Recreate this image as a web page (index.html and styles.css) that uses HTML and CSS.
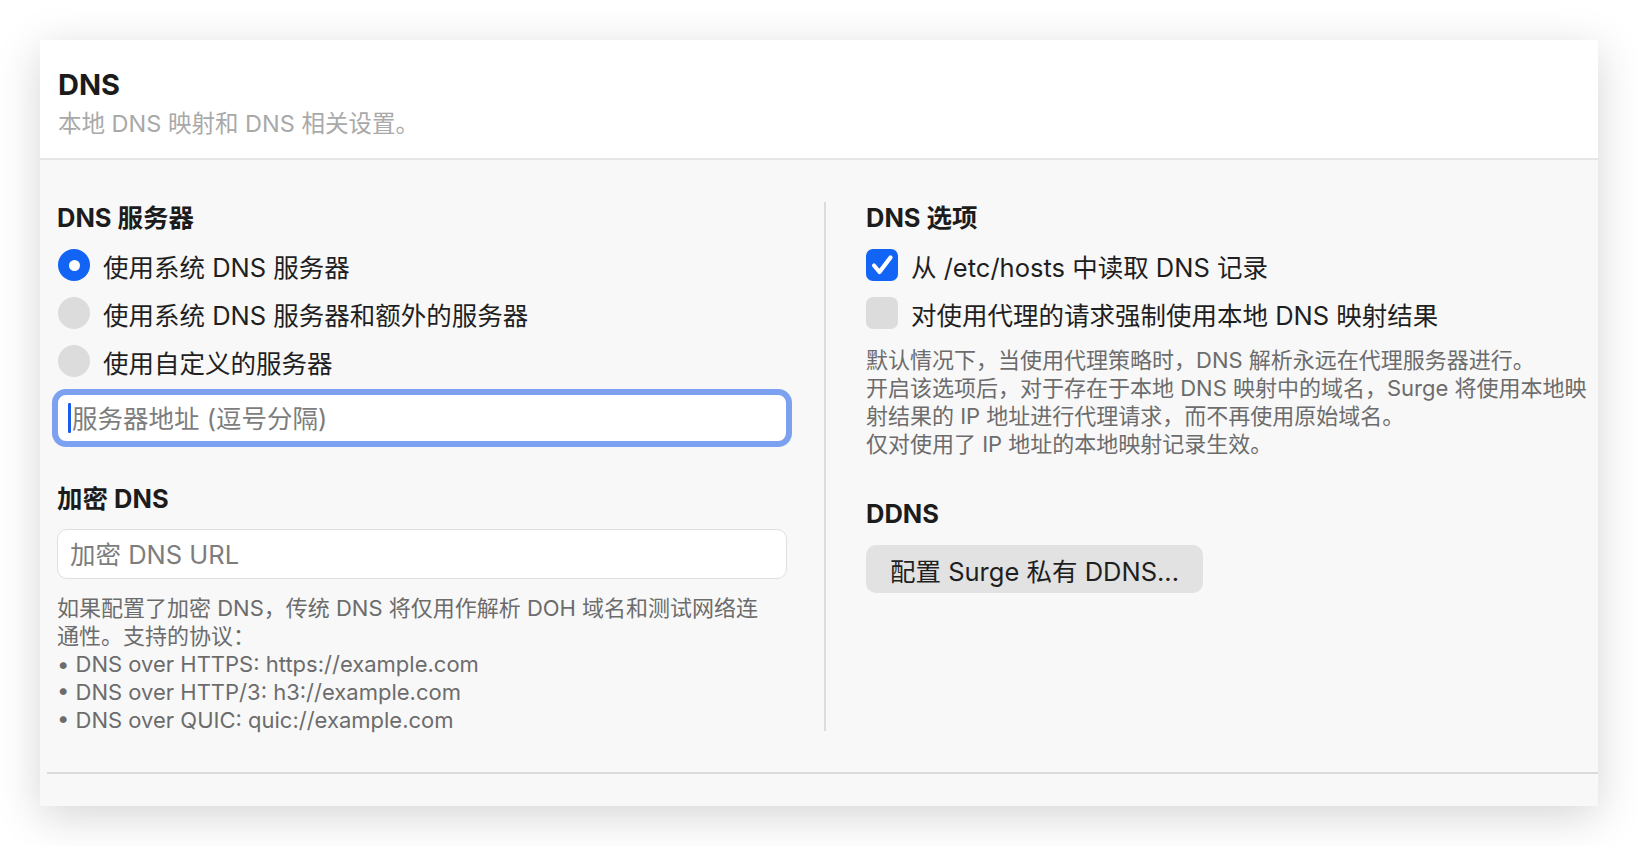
FILE: index.html
```html
<!DOCTYPE html>
<html lang="zh-CN">
<head>
  <meta charset="UTF-8">
  <title>DNS</title>
  <link rel="stylesheet" href="styles.css">
</head>
<body>

  <div class="window">
    <header class="head">
      <h1>DNS</h1>
      <p class="sub">本地 DNS 映射和 DNS 相关设置。</p>
    </header>

    <div class="body">
      <section class="col left">
        <h2>DNS 服务器</h2>
        <label class="opt first"><span class="radio on"></span>使用系统 DNS 服务器</label>
        <label class="opt"><span class="radio"></span>使用系统 DNS 服务器和额外的服务器</label>
        <label class="opt"><span class="radio"></span>使用自定义的服务器</label>
        <div class="field focus">
          <span class="caret"></span>
          <input type="text" placeholder="服务器地址 (逗号分隔)">
        </div>

        <h2 class="gap">加密 DNS</h2>
        <div class="field plain">
          <input type="text" placeholder="加密 DNS URL">
        </div>
        <p class="help">
          如果配置了加密 DNS，传统 DNS 将仅用作解析 DOH 域名和测试网络连<br>
          通性。支持的协议：<br>
          • DNS over HTTPS: https://example.com<br>
          • DNS over HTTP/3: h3://example.com<br>
          • DNS over QUIC: quic://example.com
        </p>
      </section>

      <section class="col right">
        <h2>DNS 选项</h2>
        <label class="opt first">
          <span class="check on">
            <svg viewBox="0 0 32 32" width="32" height="32"><path d="M8 16.5 L13.5 23 L24.5 8.5" fill="none" stroke="#fff" stroke-width="4.2" stroke-linecap="round" stroke-linejoin="round"/></svg>
          </span>
          从 /etc/hosts 中读取 DNS 记录
        </label>
        <label class="opt"><span class="check"></span>对使用代理的请求强制使用本地 DNS 映射结果</label>
        <p class="help r">
          默认情况下，当使用代理策略时，DNS 解析永远在代理服务器进行。<br>
          开启该选项后，对于存在于本地 DNS 映射中的域名，Surge 将使用本地映<br>
          射结果的 IP 地址进行代理请求，而不再使用原始域名。<br>
          仅对使用了 IP 地址的本地映射记录生效。
        </p>

        <h2 class="gap">DDNS</h2>
        <button class="btn">配置 Surge 私有 DDNS...</button>
      </section>
    </div>

    <div class="foot"></div>
  </div>

</body>
</html>
```

FILE: styles.css
```css
body {
  margin: 0;
  background: #fff;
  font-family: "Inter", "Noto Sans CJK SC", sans-serif;
  color: #1f1f1f;
}

.window {
  margin: 40px;
  width: 1558px;
  height: 766px;
  background: #f8f8f8;
  box-shadow: 0 10px 42px rgba(0, 0, 0, 0.17);
  display: flex;
  flex-direction: column;
}

.head {
  box-sizing: border-box;
  height: 120px;
  padding: 27px 18px 0;
  background: #fff;
  border-bottom: 2px solid #e6e6e6;
}
h1 {
  margin: 0;
  font-size: 29px;
  line-height: 36px;
  font-weight: 700;
  color: #1b1b1b;
}
.sub {
  margin: 7px 0 0;
  font-size: 23.5px;
  line-height: 28px;
  color: #a9a9a9;
}

.body {
  flex: 1;
  display: flex;
  align-items: flex-start;
  padding: 42px 18px 0 17px;
}
.left {
  flex: none;
  width: 730px;
}
.right {
  flex: 1;
  min-width: 0;
  align-self: stretch;
  margin-left: 37px;
  padding-left: 40px;
  border-left: 2px solid #dcdcdc;
  max-height: 529px;
}

h2 {
  margin: 0;
  font-size: 25.5px;
  line-height: 32px;
  font-weight: 700;
  color: #1c1c1c;
}
h2.gap { margin-top: 40px; }

.opt {
  display: flex;
  align-items: center;
  gap: 13px;
  height: 48px;
  font-size: 25.5px;
  white-space: nowrap;
}
.opt.first { margin-top: 7px; }
.left .opt { padding-left: 1px; }

.radio {
  flex: none;
  width: 32px;
  height: 32px;
  border-radius: 50%;
  background: #dcdcdc;
  display: flex;
  align-items: center;
  justify-content: center;
}
.radio.on { background: #1264f5; }
.radio.on::after {
  content: "";
  width: 11px;
  height: 11px;
  border-radius: 50%;
  background: #fff;
}

.check {
  flex: none;
  width: 32px;
  height: 32px;
  border-radius: 7px;
  background: #dcdcdc;
}
.check.on { background: #1264f5; }
.check svg { display: block; }

.field {
  box-sizing: border-box;
  height: 50px;
  border: 1px solid #dfdfdf;
  border-radius: 10px;
  background: #fff;
}
.field input {
  box-sizing: border-box;
  width: 100%;
  height: 100%;
  border: none;
  outline: none;
  background: transparent;
  padding: 0 0 0 12px;
  font-family: inherit;
  font-size: 25.5px;
  color: #1f1f1f;
}
.field input::placeholder {
  color: #7d7d7d;
  opacity: 1;
}
.field.focus {
  position: relative;
  margin: 8px -1px 0 -1px;
  border: 2px solid #7ba1f0;
  box-shadow: 0 0 0 4px #7ba1f0;
}
.field.focus input { padding-left: 14px; }
.caret {
  position: absolute;
  left: 10px;
  top: 8px;
  width: 3px;
  height: 30px;
  border-radius: 1px;
  background: #1a5cf0;
}
.field.plain { margin-top: 14px; }

.help {
  margin: 15px 0 0;
  font-size: 22px;
  line-height: 28px;
  color: #6c6c6c;
  white-space: nowrap;
}
.help.r { margin-top: 9px; }

.btn {
  margin-top: 15px;
  height: 48px;
  padding: 0 24px;
  border: none;
  border-radius: 10px;
  background: #e2e2e2;
  font-family: inherit;
  font-size: 25.5px;
  color: #1f1f1f;
}

.foot {
  height: 32px;
  margin-left: 7px;
  border-top: 2px solid #dadada;
}
```
